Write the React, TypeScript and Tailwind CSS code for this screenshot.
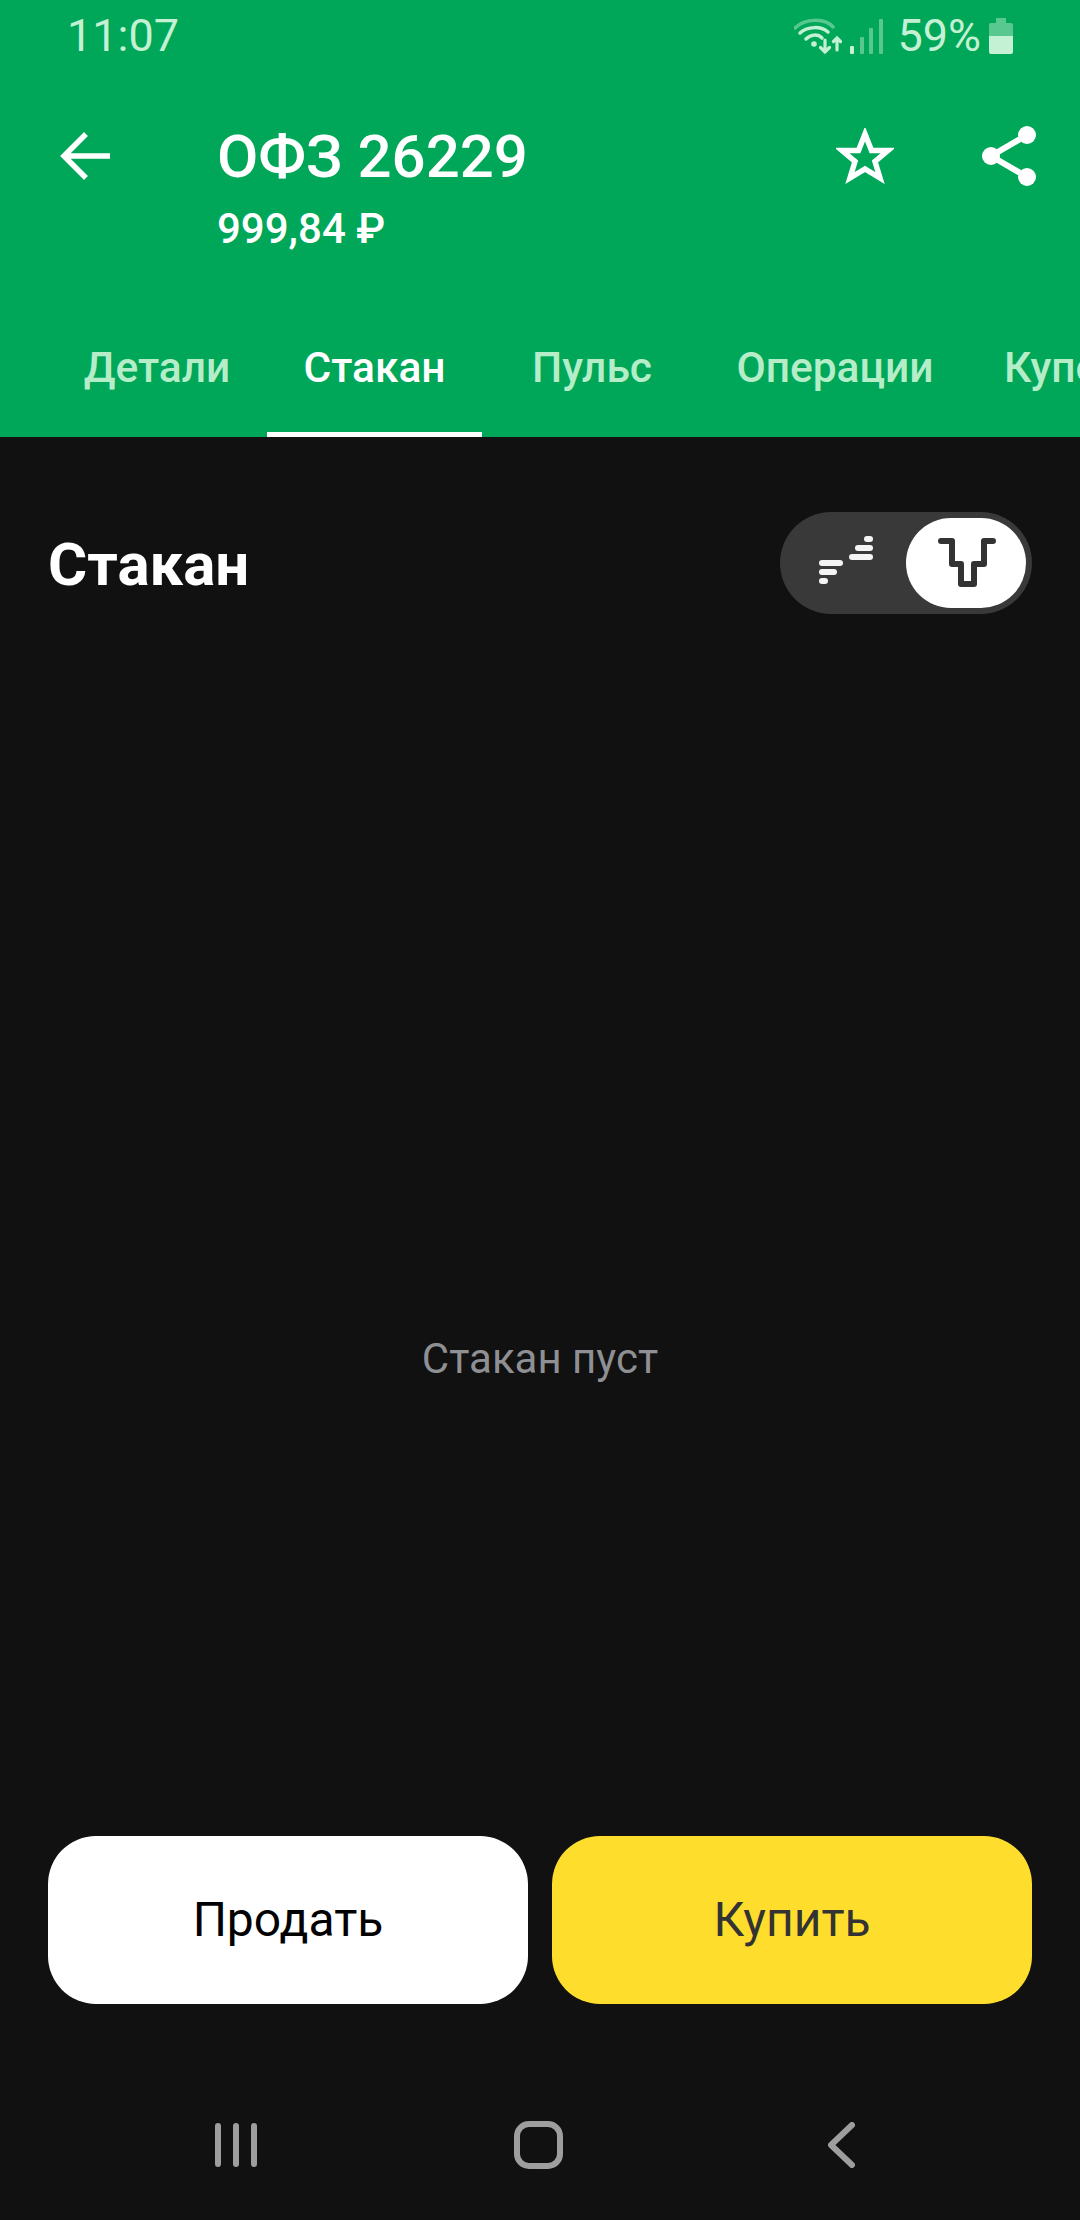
import React from "react";

const tabs = [
  { label: "Детали", className: "w-[220px] text-[#b5edc9] border-transparent" },
  { label: "Стакан", className: "w-[215px] text-white border-white" },
  { label: "Пульс", className: "w-[220px] text-[#b5edc9] border-transparent" },
  { label: "Операции", className: "w-[266px] text-[#b5edc9] border-transparent" },
  { label: "Купоны", className: "w-[226px] text-[#b5edc9] border-transparent" },
];

function StatusIcons() {
  return (
    <div className="flex items-center text-[#c4f1d4]">
      {/* wifi with up/down arrows */}
      <svg width="48" height="38" viewBox="0 0 48 38" fill="none" stroke="currentColor" strokeLinecap="round">
        <path d="M1 11C11 1 31 1 39 10" strokeWidth="3.5" opacity="0.45" />
        <path d="M6 16C14 9 27 9 34 15" strokeWidth="3.5" />
        <path d="M12 22C17 17 24 17 28 21" strokeWidth="3.5" />
        <circle cx="20" cy="27" r="2.8" fill="currentColor" stroke="none" />
        <path d="M31 23V35M26.5 30.5L31 35L35.5 30.5" strokeWidth="3.2" />
        <path d="M43 33V21M39.5 24.5L43 21L46.5 24.5" strokeWidth="3.2" />
      </svg>
      <svg className="ml-[8px]" width="33" height="36" viewBox="0 0 33 36" fill="currentColor">
        <rect x="0" y="28" width="4" height="8" rx="1" />
        <rect x="10" y="19" width="4" height="17" rx="1" opacity="0.45" />
        <rect x="19" y="10" width="4" height="26" rx="1" opacity="0.45" />
        <rect x="29" y="1" width="4" height="35" rx="1" opacity="0.45" />
      </svg>
      <span className="ml-[14px] text-[45px] leading-[52px]">59%</span>
      <svg className="ml-[8px]" width="24" height="36" viewBox="0 0 24 36" fill="currentColor">
        <path d="M7 0H17V5H22A2 2 0 0 1 24 7V18H0V7A2 2 0 0 1 2 5H7Z" opacity="0.45" />
        <path d="M0 18H24V34A2 2 0 0 1 22 36H2A2 2 0 0 1 0 34Z" />
      </svg>
    </div>
  );
}

function DepthToggle() {
  return (
    <div className="flex h-[102px] w-[252px] items-center justify-between rounded-full bg-[#393939] pl-[39px] pr-[6px]">
      <svg className="mb-[6px]" width="54" height="48" viewBox="59 46 54 48" fill="#f4f4f4">
        <rect x="59" y="70" width="24" height="6" rx="3" />
        <rect x="59" y="79" width="18" height="6" rx="3" />
        <rect x="59" y="88" width="9" height="6" rx="3" />
        <rect x="89" y="64" width="24" height="6" rx="3" />
        <rect x="95" y="55" width="18" height="6" rx="3" />
        <rect x="104" y="46" width="9" height="6" rx="3" />
      </svg>
      <div className="flex h-[90px] w-[120px] items-center justify-center rounded-full bg-white">
        <svg width="64" height="56" viewBox="172 46 64 56" fill="none" stroke="#333333" strokeWidth="6" strokeLinecap="round" strokeLinejoin="round">
          <path d="M179 52H190V75H199V95H212V75H222V52H231" />
        </svg>
      </div>
    </div>
  );
}

export default function App() {
  return (
    <div className="flex h-[2220px] w-[1080px] flex-col overflow-hidden bg-[#111111] font-['Roboto',sans-serif]">
      <header className="flex h-[437px] flex-col bg-[#00a758]">
        <div className="flex h-[72px] items-center justify-between pl-[67px] pr-[67px]">
          <span className="text-[45px] leading-[52px] text-[#c4f1d4]">11:07</span>
          <StatusIcons />
        </div>

        <div className="flex items-start pl-[60px] pr-[44px] pt-[51px]">
          <svg className="mt-[9px]" width="50" height="48" viewBox="0 0 50 48" fill="none" stroke="white" strokeWidth="5.5">
            <path d="M50 24H5M26 2L4 24L26 46" />
          </svg>
          <div className="ml-[107px]">
            <div className="text-[60px] font-medium leading-[68px] text-white">ОФЗ 26229</div>
            <div className="mt-[15px] text-[42px] font-medium leading-[46px] text-white">999,84 ₽</div>
          </div>
          <svg className="ml-auto mt-[5px]" width="58" height="56" viewBox="0 0 58 56" fill="none" stroke="white" strokeWidth="5.5">
            <path d="M29 6L35.5 22.5H52L39 33.5L44 50L29 41L14 50L19 33.5L6 22.5H22.5Z" />
          </svg>
          <svg className="ml-[88px] mt-[3px]" width="54" height="60" viewBox="0 0 54 60" fill="white">
            <path d="M45 9L9 30L45 51" fill="none" stroke="white" strokeWidth="6" />
            <circle cx="45" cy="9" r="9" />
            <circle cx="9" cy="30" r="9" />
            <circle cx="45" cy="51" r="9" />
          </svg>
        </div>

        <nav className="mt-auto flex h-[138px] overflow-hidden pl-[47px]">
          {tabs.map((tab) => (
            <div
              key={tab.label}
              className={`flex shrink-0 items-center justify-center border-b-[5px] pt-[5px] text-[42.5px] font-medium ${tab.className}`}
            >
              {tab.label}
            </div>
          ))}
        </nav>
      </header>

      <main className="flex flex-1 flex-col px-[48px] pt-[75px]">
        <div className="flex items-center justify-between">
          <h1 className="mt-[4px] text-[60px] font-bold leading-[66px] text-white">Стакан</h1>
          <DepthToggle />
        </div>

        <p className="mt-[722px] text-center text-[42px] leading-[46px] text-[#8e9094]">Стакан пуст</p>

        <div className="mt-auto flex gap-[24px]">
          <button className="h-[168px] flex-1 rounded-[48px] bg-white text-[48px] text-black">Продать</button>
          <button className="h-[168px] flex-1 rounded-[48px] bg-[#ffdd2d] text-[48px] text-[#333333]">Купить</button>
        </div>

        <div className="flex h-[216px] items-center pl-[167px] pt-[66px]">
          {/* recents */}
          <svg width="42" height="46" viewBox="0 0 42 46" fill="#9e9e9e">
            <rect x="0" y="1" width="6" height="44" rx="3" />
            <rect x="18" y="1" width="6" height="44" rx="3" />
            <rect x="36" y="1" width="6" height="44" rx="3" />
          </svg>
          {/* home */}
          <svg className="ml-[257px]" width="49" height="48" viewBox="0 0 49 48" fill="none" stroke="#9e9e9e" strokeWidth="6">
            <rect x="3" y="3" width="43" height="42" rx="12" />
          </svg>
          {/* back */}
          <svg className="ml-[265px]" width="27" height="46" viewBox="0 0 27 46" fill="none" stroke="#9e9e9e" strokeWidth="6" strokeLinecap="round" strokeLinejoin="round">
            <path d="M24 3L3 23L24 43" />
          </svg>
        </div>
      </main>
    </div>
  );
}
